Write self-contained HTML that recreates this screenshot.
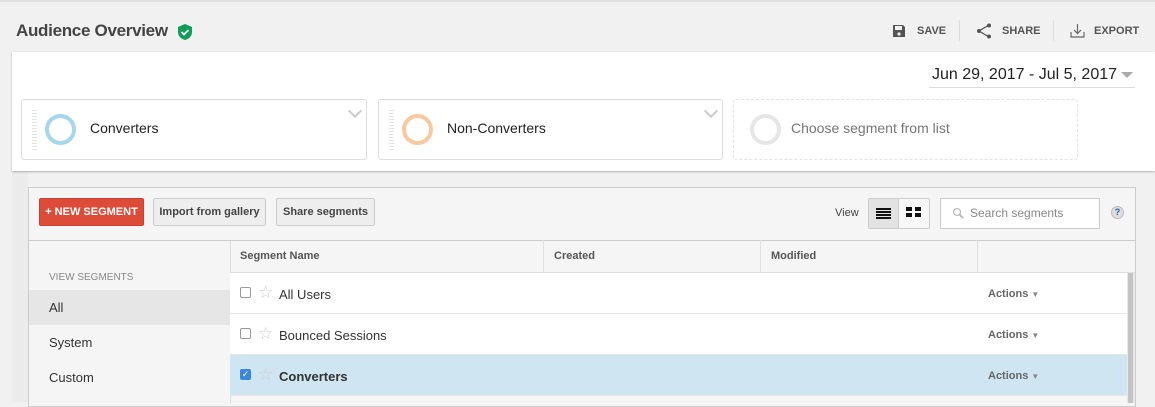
<!DOCTYPE html>
<html><head><style>
*{box-sizing:border-box;margin:0;padding:0}
body{width:1155px;height:402px;overflow:hidden;background:#f1f1f1;font-family:"Liberation Sans",sans-serif;color:#333;position:relative}
.a{position:absolute}
.top{left:0;top:0;width:1155px;height:2px;background:#e0e0e0}
.title{left:16px;top:21px;font-size:17px;font-weight:bold;color:#444;letter-spacing:-0.3px}
.hb{top:25px;font-size:11px;font-weight:bold;color:#555}
.panel{left:12px;top:52px;width:1143px;height:119px;background:#fff;box-shadow:0 1px 2px rgba(0,0,0,.25)}
.card{top:99px;height:61px;border:1px solid #ddd;border-radius:3px;background:#fff}
.card .bars{position:absolute;left:10px;top:10px;width:5px;height:42px;background:repeating-linear-gradient(#e4e4e4 0 1px,transparent 1px 3px)}
.ring{position:absolute;left:23px;top:14px;width:31px;height:31px;border-radius:50%;border:4px solid}
.card .lbl{position:absolute;left:68px;top:20px;font-size:14px;color:#222}
.chev{position:absolute;right:6px;top:6px;width:10px;height:10px;border-right:2px solid #ccc;border-bottom:2px solid #ccc;transform:rotate(45deg)}
.ed{left:28px;top:187px;width:1108px;height:220px;background:#f5f5f5;border:1px solid #ccc}
.btn{top:198px;height:28px;border:1px solid #ccc;background:#eee;font-size:11px;font-weight:bold;color:#444;line-height:26px;text-align:center;border-radius:2px}
.th{top:240px;height:33px;font-size:11px;font-weight:bold;color:#555;line-height:33px;padding-left:10px;border-right:1px solid #e0e0e0}
.row{left:230px;width:897px;height:41px;border-bottom:1px solid #e5e5e5;background:#fff}
.row .cb{position:absolute;left:10px;top:14px;width:11px;height:11px;border:1px solid #999;border-radius:2px;background:#fff}
.row .st{position:absolute;left:28px;top:10px;font-size:17px;color:#ccc}
.row .nm{position:absolute;left:49px;top:14px;font-size:13px;color:#333}
.row .ac{position:absolute;left:758px;top:15px;font-size:11px;font-weight:bold;color:#666}
.side{font-size:13px;color:#333;left:49px}
</style></head><body>
<div class="a top"></div>
<div class="a" style="left:12px;top:171px;width:16px;height:231px;background:#ebebeb"></div>
<div class="a title">Audience Overview</div>
<svg class="a" style="left:178px;top:24px" width="14" height="16" viewBox="0 0 14 16"><path d="M7 0L0 3v5c0 4 3 7 7 8 4-1 7-4 7-8V3z" fill="#0f9d58"/><path d="M3.5 8l2.5 2.5 4.5-4.5" stroke="#fff" stroke-width="1.8" fill="none"/></svg>
<svg class="a" style="left:892px;top:24px" width="14" height="14" viewBox="0 0 14 14"><path d="M1 1h10l2 2v10H1z" fill="#555"/><rect x="3" y="2" width="7" height="4" fill="#f1f1f1"/><circle cx="7" cy="10" r="1.6" fill="#f1f1f1"/></svg>
<div class="a hb" style="left:917px">SAVE</div>
<div class="a" style="left:959px;top:20px;width:1px;height:21px;background:#ddd"></div>
<svg class="a" style="left:976px;top:23px" width="16" height="16" viewBox="0 0 16 16"><path d="M13 2L3 8l10 6" stroke="#555" stroke-width="1.3" fill="none"/><circle cx="13" cy="2.5" r="2" fill="#555"/><circle cx="3" cy="8" r="2" fill="#555"/><circle cx="13" cy="13.5" r="2" fill="#555"/></svg>
<div class="a hb" style="left:1002px">SHARE</div>
<div class="a" style="left:1053px;top:20px;width:1px;height:21px;background:#ddd"></div>
<svg class="a" style="left:1070px;top:23px" width="15" height="15" viewBox="0 0 15 15"><path d="M7.5 1v9M4 7l3.5 3.5L11 7M1 9v5h13V9" stroke="#666" stroke-width="1.2" fill="none"/></svg>
<div class="a hb" style="left:1094px">EXPORT</div>
<div class="a panel"></div>
<div class="a" style="left:932px;top:66px;font-size:16px;color:#222">Jun 29, 2017 - Jul 5, 2017</div>
<div class="a" style="left:1121px;top:72px;width:0;height:0;border-left:6px solid transparent;border-right:6px solid transparent;border-top:6px solid #aaa"></div>
<div class="a" style="left:929px;top:87px;width:206px;height:1px;background:#ddd"></div>
<div class="a card" style="left:21px;width:346px"><div class="bars"></div><div class="ring" style="border-color:#a6d5ee"></div><div class="lbl">Converters</div><div class="chev"></div></div>
<div class="a card" style="left:378px;width:345px"><div class="bars"></div><div class="ring" style="border-color:#f8c9a0"></div><div class="lbl">Non-Converters</div><div class="chev"></div></div>
<div class="a card" style="left:733px;width:345px;border:1px dashed #e2e2e2"><div class="ring" style="left:16px;border-color:#e6e6e6"></div><div class="lbl" style="left:57px;color:#777">Choose segment from list</div></div>
<div class="a ed"></div>
<div class="a btn" style="left:39px;width:105px;background:#dd4b39;border-color:#d04030;color:#fff">+ NEW SEGMENT</div>
<div class="a btn" style="left:153px;width:113px">Import from gallery</div>
<div class="a btn" style="left:276px;width:99px">Share segments</div>
<div class="a" style="left:835px;top:207px;font-size:11px;color:#444">View</div>
<div class="a" style="left:868px;top:198px;width:62px;height:31px;border:1px solid #ccc;border-radius:2px;background:#f8f8f8"></div>
<div class="a" style="left:869px;top:199px;width:30px;height:29px;background:#e2e2e2;border-right:1px solid #ccc"></div>
<div class="a" style="left:876px;top:208px;width:15px;height:11px;background:repeating-linear-gradient(#111 0 2px,transparent 2px 3px)"></div>
<div class="a" style="left:906px;top:207px;width:6px;height:4px;background:#111;box-shadow:9px 0 #111,0 6px #111,9px 6px #111"></div>
<div class="a" style="left:940px;top:198px;width:160px;height:31px;border:1px solid #ccc;background:#fff"></div>
<svg class="a" style="left:952px;top:207px" width="12" height="12" viewBox="0 0 12 12"><circle cx="5" cy="5" r="3.5" stroke="#bbb" stroke-width="1.3" fill="none"/><path d="M7.5 7.5l3.5 3.5" stroke="#bbb" stroke-width="2"/></svg>
<div class="a" style="left:970px;top:206px;font-size:12px;color:#888">Search segments</div>
<div class="a" style="left:1111px;top:206px;width:13px;height:13px;border-radius:50%;background:#ddd;border:1px solid #bbb;font-size:9px;font-weight:bold;color:#2a62b5;text-align:center;line-height:11px">?</div>
<div class="a" style="left:29px;top:240px;width:1106px;height:1px;background:#ccc"></div>
<div class="a" style="left:230px;top:241px;width:905px;height:32px;background:#f5f5f5;border-left:1px solid #ddd;border-bottom:1px solid #ddd"></div>
<div class="a th" style="left:230px;width:314px">Segment Name</div>
<div class="a th" style="left:544px;width:217px">Created</div>
<div class="a th" style="left:761px;width:217px">Modified</div>
<div class="a" style="left:49px;top:272px;font-size:10px;color:#888">VIEW SEGMENTS</div>
<div class="a" style="left:29px;top:290px;width:201px;height:35px;background:#e6e6e6"></div>
<div class="a side" style="top:300px">All</div>
<div class="a side" style="top:335px">System</div>
<div class="a side" style="top:370px">Custom</div>
<div class="a" style="left:230px;top:273px;width:1px;height:130px;background:#ddd"></div>
<div class="a row" style="top:273px"><div class="cb"></div><div class="st">☆</div><div class="nm">All Users</div><div class="ac">Actions <span style="font-size:8px;color:#888">▼</span></div></div>
<div class="a row" style="top:314px"><div class="cb"></div><div class="st">☆</div><div class="nm">Bounced Sessions</div><div class="ac">Actions <span style="font-size:8px;color:#888">▼</span></div></div>
<div class="a row" style="top:355px;background:#cfe5f2"><div class="cb" style="background:#3b87e0;border-color:#3b87e0;color:#fff;font-size:9px;line-height:9px;text-align:center">✓</div><div class="st">☆</div><div class="nm" style="font-weight:bold">Converters</div><div class="ac">Actions <span style="font-size:8px;color:#888">▼</span></div></div>
<div class="a" style="left:1127px;top:273px;width:8px;height:130px;background:#e8e8e8"></div>
<div class="a" style="left:1128px;top:273px;width:5px;height:130px;background:#c4c4c4"></div>
</body></html>
